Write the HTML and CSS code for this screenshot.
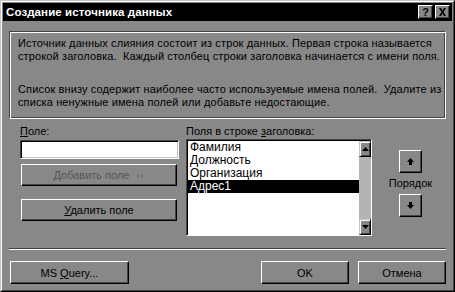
FILE: index.html
```html
<!DOCTYPE html>
<html lang="ru">
<head>
<meta charset="utf-8">
<title>Создание источника данных</title>
<link rel="stylesheet" href="styles.css">
</head>
<body>
<div class="window">
  <div class="frame">
    <div class="titlebar">
      <span class="title">Создание источника данных</span>
      <div class="tbtns">
        <span class="tbtn help">?</span>
        <span class="tbtn close"><svg width="9" height="8" viewBox="0 0 9 8"><path d="M1 0h2l1.5 2.5L6 0h2L5.5 4 8 8H6L4.5 5.5 3 8H1l2.5-4z" fill="#000"/></svg></span>
      </div>
    </div>
    <div class="info">
      <p>Источник данных слияния состоит из строк данных. Первая строка называется<br>строкой заголовка.&nbsp; Каждый столбец строки заголовка начинается с имени поля.</p>
      <p>Список внизу содержит наиболее часто используемые имена полей.&nbsp; Удалите из<br>списка ненужные имена полей или добавьте недостающие.</p>
    </div>
    <div class="main">
      <div class="col-left">
        <div class="label"><u>П</u>оле:</div>
        <div class="input"></div>
        <div class="btn disabled add"><span>Добавить поле <span class="chev">››</span></span></div>
        <div class="btn del"><span><u>У</u>далить поле</span></div>
      </div>
      <div class="col-list">
        <div class="label">Поля в строке <u>з</u>аголовка:</div>
        <div class="listbox">
          <div class="items">
            <div class="item">Фамилия</div>
            <div class="item">Должность</div>
            <div class="item">Организация</div>
            <div class="item sel">Адрес1</div>
          </div>
          <div class="scroll">
            <div class="sbtn"><svg width="7" height="4" viewBox="0 0 7 4"><path d="M3.5 0L7 4H0z" fill="#000"/></svg></div>
            <div class="track"></div>
            <div class="sbtn"><svg width="7" height="4" viewBox="0 0 7 4"><path d="M0 0h7L3.5 4z" fill="#000"/></svg></div>
          </div>
        </div>
      </div>
      <div class="col-order">
        <div class="obtn"><svg width="7" height="7" viewBox="0 0 7 7"><path d="M3.5 0L7 4H5v3H2V4H0z" fill="#000"/></svg></div>
        <div class="olabel">Порядок</div>
        <div class="obtn"><svg width="7" height="7" viewBox="0 0 7 7"><path d="M2 0h3v3h2L3.5 7 0 3h2z" fill="#000"/></svg></div>
      </div>
    </div>
    <div class="sep"></div>
    <div class="bottom">
      <div class="btn query"><span>MS <u>Q</u>uery...</span></div>
      <div class="right">
        <div class="btn ok"><span>OK</span></div>
        <div class="btn cancel"><span>Отмена</span></div>
      </div>
    </div>
  </div>
</div>
</body>
</html>
```
FILE: styles.css
```css
html, body {
  margin: 0;
  padding: 0;
  background: #888;
}
body {
  font-family: "Liberation Sans", Arial, sans-serif;
  font-size: 11px;
  color: #000;
}
.window {
  width: 455px;
  height: 292px;
  box-sizing: border-box;
  border: 1px solid;
  border-color: #c4c4c4 #000 #000 #c4c4c4;
  background: #888;
}
.frame {
  height: 100%;
  box-sizing: border-box;
  border: 1px solid;
  border-color: #fff #444 #444 #fff;
  padding: 1px;
  display: flex;
  flex-direction: column;
}
.titlebar {
  height: 18px;
  background: #000;
  display: flex;
  align-items: center;
  justify-content: space-between;
  padding: 0 2px 0 3px;
}
.title {
  color: #fff;
  font-weight: bold;
  font-size: 11.5px;
  letter-spacing: 0.1px;
}
.tbtns {
  display: flex;
  gap: 2px;
}
.tbtn {
  width: 15px;
  height: 14px;
  box-sizing: border-box;
  background: #888;
  border: 1px solid;
  border-color: #fff #000 #000 #fff;
  box-shadow: inset -1px -1px 0 #444;
  display: flex;
  align-items: center;
  justify-content: center;
}
.help {
  font-weight: bold;
  font-size: 11px;
  line-height: 11px;
}
.info {
  margin: 10px 6px 0;
  height: 88px;
  box-sizing: border-box;
  border: 1px solid;
  border-color: #444 #fff #fff #444;
  box-shadow: inset 1px 1px 0 #fff, inset -1px -1px 0 #444;
  padding: 5px 0 0 8px;
  line-height: 13px;
  letter-spacing: 0.12px;
  white-space: nowrap;
  overflow: hidden;
}
.info p {
  margin: 0 0 20px;
}
.main {
  display: flex;
  margin-top: 6px;
  padding-left: 17px;
}
.label {
  line-height: 13px;
  height: 13px;
}
.col-left {
  width: 159px;
  display: flex;
  flex-direction: column;
}
.input {
  margin-top: 2px;
  height: 19px;
  box-sizing: border-box;
  background: #fff;
  border: 1px solid;
  border-color: #444 #fff #fff #444;
  box-shadow: inset 1px 1px 0 #000, inset -1px -1px 0 #c4c4c4;
}
.btn {
  height: 22px;
  box-sizing: border-box;
  border: 1px solid;
  border-color: #fff #000 #000 #fff;
  box-shadow: inset -1px -1px 0 #444;
  display: flex;
  align-items: center;
  justify-content: center;
  white-space: nowrap;
}
.add {
  margin: 5px 0 0 1px;
  width: 156px;
}
.del {
  margin: 13px 0 0 1px;
  width: 156px;
}
.disabled {
  color: #555;
}
.chev {
  font-size: 9px;
  margin-left: 4px;
  letter-spacing: 1px;
}
.col-list {
  margin-left: 7px;
  width: 186px;
  display: flex;
  flex-direction: column;
}
.listbox {
  margin-top: 1px;
  height: 97px;
  box-sizing: border-box;
  border: 1px solid;
  border-color: #444 #fff #fff #444;
  box-shadow: inset 1px 1px 0 #000;
  padding: 1px 0 0 1px;
  background: #fff;
  display: flex;
}
.items {
  flex: 1;
}
.item {
  height: 13px;
  line-height: 13px;
  padding-left: 2px;
  font-size: 12px;
}
.item.sel {
  background: #000;
  color: #fff;
}
.scroll {
  width: 12px;
  display: flex;
  flex-direction: column;
  background: #b4b4b4;
}
.sbtn {
  height: 16px;
  box-sizing: border-box;
  background: #888;
  border: 1px solid;
  border-color: #c4c4c4 #000 #000 #c4c4c4;
  box-shadow: inset 1px 1px 0 #fff, inset -1px -1px 0 #444;
  display: flex;
  align-items: center;
  justify-content: center;
}
.track {
  flex: 1;
}
.col-order {
  margin-left: 14px;
  width: 49px;
  display: flex;
  flex-direction: column;
  align-items: center;
  padding-top: 25px;
}
.obtn {
  width: 23px;
  height: 23px;
  box-sizing: border-box;
  border: 1px solid;
  border-color: #fff #000 #000 #fff;
  box-shadow: inset -1px -1px 0 #444;
  display: flex;
  align-items: center;
  justify-content: center;
}
.olabel {
  margin: 4px 0;
  line-height: 13px;
}
.sep {
  margin: 12px 6px 0;
  height: 0;
  border-top: 1px solid #444;
  border-bottom: 1px solid #fff;
}
.bottom {
  display: flex;
  justify-content: space-between;
  margin: 11px 6px 0 7px;
}
.query {
  width: 119px;
  height: 23px;
}
.right {
  display: flex;
  gap: 9px;
}
.ok, .cancel {
  width: 88px;
  height: 23px;
}
```
